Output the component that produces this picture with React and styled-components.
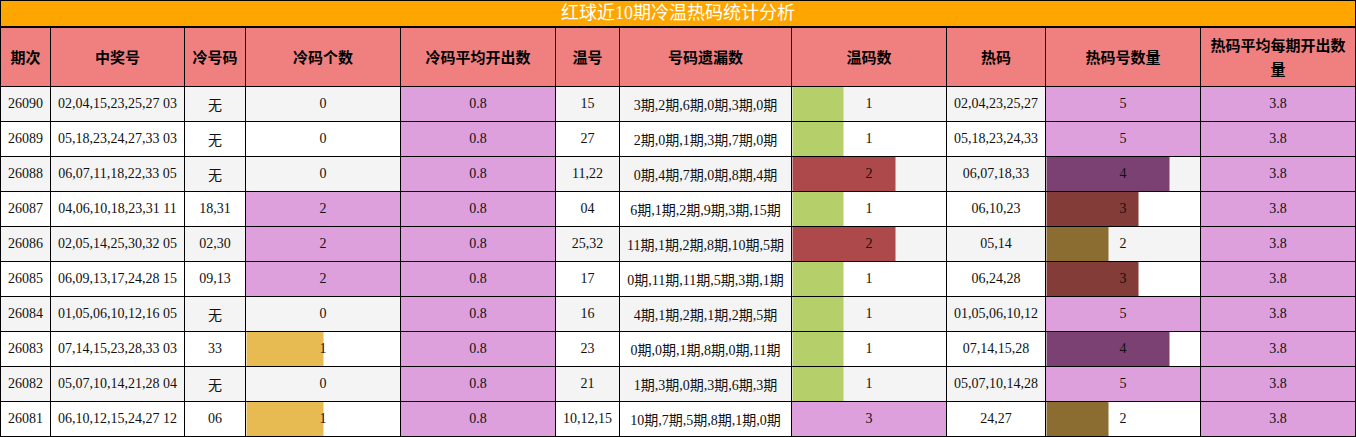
import React from 'react';
import styled, { createGlobalStyle } from 'styled-components';

const COLS = [50, 134, 61, 155, 155, 64, 172, 155, 99, 155, 155];

const HEADERS = ['期次', '中奖号', '冷号码', '冷码个数', '冷码平均开出数', '温号', '号码遗漏数', '温码数', '热码', '热码号数量', '热码平均每期开出数量'];

const ROWS = [
  ['26090', '02,04,15,23,25,27 03', '无', 0, '15', '3期,2期,6期,0期,3期,0期', 1, '02,04,23,25,27', 5],
  ['26089', '05,18,23,24,27,33 03', '无', 0, '27', '2期,0期,1期,3期,7期,0期', 1, '05,18,23,24,33', 5],
  ['26088', '06,07,11,18,22,33 05', '无', 0, '11,22', '0期,4期,7期,0期,8期,4期', 2, '06,07,18,33', 4],
  ['26087', '04,06,10,18,23,31 11', '18,31', 2, '04', '6期,1期,2期,9期,3期,15期', 1, '06,10,23', 3],
  ['26086', '02,05,14,25,30,32 05', '02,30', 2, '25,32', '11期,1期,2期,8期,10期,5期', 2, '05,14', 2],
  ['26085', '06,09,13,17,24,28 15', '09,13', 2, '17', '0期,11期,11期,5期,3期,1期', 1, '06,24,28', 3],
  ['26084', '01,05,06,10,12,16 05', '无', 0, '16', '4期,1期,2期,1期,2期,5期', 1, '01,05,06,10,12', 5],
  ['26083', '07,14,15,23,28,33 03', '33', 1, '23', '0期,0期,1期,8期,0期,11期', 1, '07,14,15,28', 4],
  ['26082', '05,07,10,14,21,28 04', '无', 0, '21', '1期,3期,0期,3期,6期,3期', 1, '05,07,10,14,28', 5],
  ['26081', '06,10,12,15,24,27 12', '06', 1, '10,12,15', '10期,7期,5期,8期,1期,0期', 3, '24,27', 2],
];

const PLUM = '#dda0dd';

// bar colours per column, keyed by value (max value fills the cell with plum)
const COLD_BAR = { max: 2, colors: { 1: '#e7ba52' } };
const WARM_BAR = { max: 3, colors: { 1: '#b5cf6b', 2: '#ad494a' } };
const HOT_BAR = { max: 5, colors: { 2: '#8c6d31', 3: '#843c39', 4: '#7b4173' } };

const GlobalStyle = createGlobalStyle`
  html, body {
    margin: 0;
    padding: 0;
    background: #fff;
  }
  body {
    font-family: "Liberation Serif", "Noto Sans CJK SC", serif;
    font-size: 14px;
    color: #111;
  }
`;

const Wrap = styled.div`
  width: 1356px;
`;

const Title = styled.div`
  height: 25px;
  border: 1px solid #000;
  background: #ffa500;
  color: #fff;
  font-size: 18px;
  line-height: 25px;
  text-align: center;
`;

const Table = styled.table`
  width: 1356px;
  table-layout: fixed;
  border-collapse: collapse;
  border: 1px solid #000;
`;

const HeadRow = styled.tr`
  height: 59px;
`;

const Th = styled.th`
  border: 1px solid #000;
  background: #f08080;
  font-family: "Noto Sans CJK SC", sans-serif;
  font-size: 15px;
  font-weight: bold;
  line-height: 24px;
  padding: 0 5px;
  text-align: center;
  color: #000;
`;

const Row = styled.tr`
  height: 35px;
  background: ${({ $odd }) => ($odd ? '#f4f4f4' : '#fff')};
`;

const Td = styled.td`
  border: 1px solid #000;
  padding: 0 2px;
  text-align: center;
  white-space: nowrap;
  background: ${({ $fill }) => $fill || 'transparent'};
`;

const BarTd = styled(Td)`
  padding: 0;
`;

function BarCell({ value, scale }) {
  if (value === scale.max) return <Td $fill={PLUM}>{value}</Td>;
  const color = scale.colors[value];
  if (!color) return <Td>{value}</Td>;
  const pct = (value / scale.max) * 100;

  return (
    <BarTd style={{ background: `linear-gradient(to right, ${color} ${pct}%, transparent ${pct}%)` }}>
      {value}
    </BarTd>
  );
}

export default function App() {
  return (
    <Wrap>
      <GlobalStyle />
      <Title>红球近10期冷温热码统计分析</Title>
      <Table>
        <colgroup>
          {COLS.map((w, i) => <col key={i} style={{ width: w }} />)}
        </colgroup>
        <thead>
          <HeadRow>
            {HEADERS.map(h => <Th key={h}>{h}</Th>)}
          </HeadRow>
        </thead>
        <tbody>
          {ROWS.map((r, i) => (
            <Row key={r[0]} $odd={i % 2 === 0}>
              <Td>{r[0]}</Td>
              <Td>{r[1]}</Td>
              <Td>{r[2]}</Td>
              <BarCell value={r[3]} scale={COLD_BAR} />
              <Td $fill={PLUM}>0.8</Td>
              <Td>{r[4]}</Td>
              <Td>{r[5]}</Td>
              <BarCell value={r[6]} scale={WARM_BAR} />
              <Td>{r[7]}</Td>
              <BarCell value={r[8]} scale={HOT_BAR} />
              <Td $fill={PLUM}>3.8</Td>
            </Row>
          ))}
        </tbody>
      </Table>
    </Wrap>
  );
}
